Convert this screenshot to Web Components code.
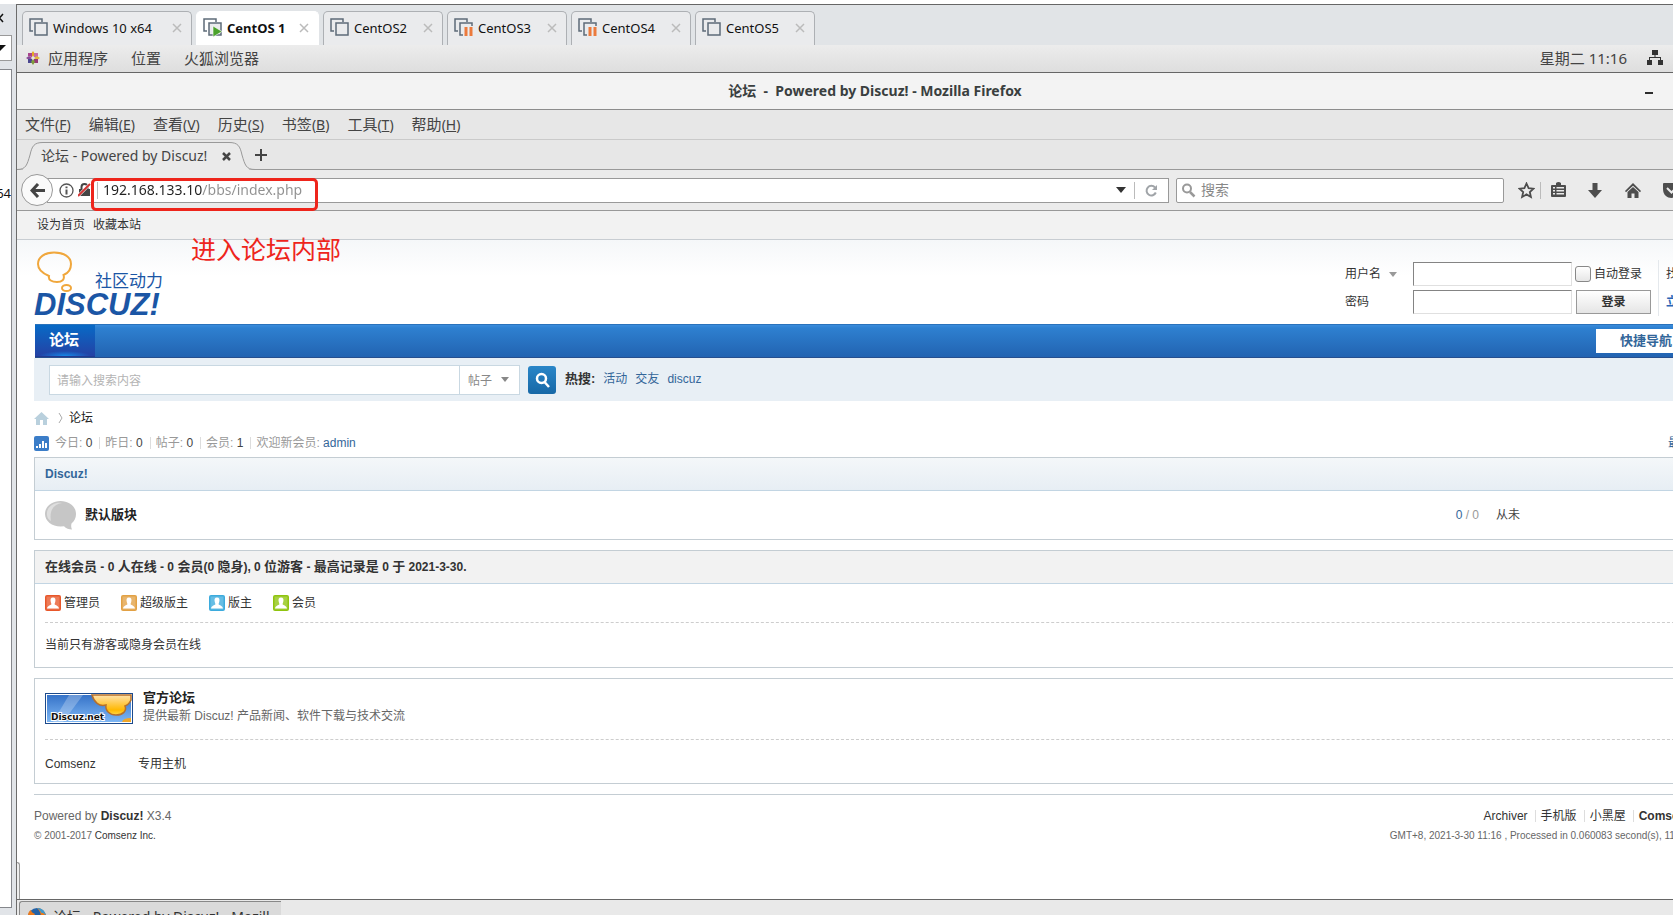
<!DOCTYPE html>
<html lang="zh-CN">
<head>
<meta charset="utf-8">
<title>论坛 - Powered by Discuz!</title>
<style>
html,body{margin:0;height:100%;overflow:hidden;background:#fff}
body{font:12px/18px "Liberation Sans","Noto Sans CJK SC",sans-serif;color:#444}
</style>
</head>
<body>
<vm-workspace></vm-workspace>
<script>
const define = (name, css, html) => {
  const t = document.createElement('template');
  t.innerHTML = `<style>*{box-sizing:border-box}:host{display:block;box-sizing:border-box}a{color:inherit;text-decoration:none}button,input,select{font:inherit;color:inherit;margin:0}button{padding:0;border:0;background:none}svg{display:block;flex:none}${css}</style>${html}`;
  customElements.define(name, class extends HTMLElement {
    constructor() {
      super();
      this.attachShadow({mode: 'open'}).append(t.content.cloneNode(true));
    }
  });
};
const UI = '"Noto Sans","Noto Sans CJK SC",sans-serif';

/* ---------- host application: library strip and machine tabs ---------- */
define('vm-library', `
:host{width:17px;display:flex;flex-direction:column;background:#e1e4e8;border-right:1px solid #6c6c6c;font:13px/18px ${UI};color:#111;overflow:hidden}
.head{height:31px;padding-top:5px;display:flex}
.combo{width:12px;height:26px;border:1px solid #9a9a9a;border-left:0;background:#fff;display:flex;align-items:center}
.list{flex:1;margin-top:8px;margin-bottom:7px;width:12px;border:1px solid #85878c;border-left:0;background:#fff;overflow:hidden;padding-top:114px;display:flex;justify-content:flex-end;align-items:flex-start}
`, `
<div class="head"><svg width="5" height="18" stroke="#111" stroke-width="1.5" fill="none"><path d="M-4 5L3 13M3 5L-4 13"/></svg></div>
<div class="combo"><svg width="7" height="6"><path d="M-6 0H6L0 6Z" fill="#111"/></svg></div>
<div class="list">64</div>`);

define('vm-tab', `
:host{width:120px;height:34px;display:flex;align-items:center;gap:5px;padding:0 9px 2px 6px;background:#eaebed;border:1px solid #adb0b4;border-bottom:0;border-radius:5px 5px 0 0;font:13px/18px ${UI};color:#111;white-space:nowrap}
:host([wide]){width:170px}
:host([active]){width:123px;background:#fff;border-color:#fff;font-weight:700}
.play,.pause{display:none}
:host([state=play]) .play,:host([state=pause]) .pause{display:block}
button{margin-left:auto}
`, `
<svg width="19" height="19" viewBox="0 0 19 19" fill="none" stroke="#5d6b78" stroke-width="1.5"><path d="M4 13H1V1H13V4"/><rect x="6" y="5" width="12" height="12" fill="#eaebed"/>
<path class="play" d="M10 8L19 13.500L10 19Z" fill="#4ba22b" stroke="#fff" stroke-width=".6"/>
<g class="pause" stroke="none"><path d="M9 8H19V19H9Z" fill="#eaebed"/><path d="M10.500 9H13.500V18H10.500ZM15.500 9H18.500V18H15.500Z" fill="#ec7a3c"/></g></svg>
<slot></slot>
<button aria-label="关闭"><svg width="10" height="10" stroke="#bbb" stroke-width="1.5"><path d="M1 1L9 9M9 1L1 9"/></svg></button>`);

define('vm-tabstrip', `
:host{display:flex;gap:4px;height:41px;padding:6px 4px 0 5px;background:#e1e4e7;border-top:1px solid #666}
`, `<vm-tab wide>Windows 10 x64</vm-tab><vm-tab active state="play">CentOS 1</vm-tab><vm-tab>CentOS2</vm-tab><vm-tab state="pause">CentOS3</vm-tab><vm-tab state="pause">CentOS4</vm-tab><vm-tab>CentOS5</vm-tab>`);

/* ---------- guest desktop panel ---------- */
define('guest-panel', `
:host{display:flex;align-items:center;height:28px;padding:0 70px 2px 9px;background:linear-gradient(#ececec,#dedede);border-bottom:1px solid #666;font:15px/20px ${UI};color:#444;white-space:nowrap}
a{margin-right:23px}
svg{margin-right:8px}
time{margin-left:auto;margin-right:20px}
.net{margin:0}
`, `
<svg width="14" height="14" viewBox="0 0 14 14"><path d="M7 0L9 3L7 6L5 3Z" fill="#e5a820"/><path d="M2 2L6 2L6 6L2 5Z" fill="#a8448c"/><path d="M12 2L8 2L8 6L12 6Z" fill="#c86fa5"/><path d="M0 7L3 5L6 7L3 9Z" fill="#8a4a98"/><path d="M14 7L11 5L8 7L11 9Z" fill="#e2b93a"/><path d="M2 12L2 8L6 8L6 12Z" fill="#4b468f"/><path d="M12 12L8 12L8 8L12 8Z" fill="#963a75"/><path d="M7 14L5 11L7 8L9 11Z" fill="#7e9c3a"/></svg>
<a href="#">应用程序</a><a href="#">位置</a><a href="#">火狐浏览器</a>
<time>星期二 11:16</time>
<svg class="net" width="16" height="16" fill="#333"><path d="M5 0H11V5H8.500V7H14V10H16V15H11V10H13V8H3V10H5V15H0V10H2V7H7.500V5H5Z"/></svg>`);

/* ---------- browser chrome ---------- */
define('ff-title', `
:host{display:grid;grid-template-columns:1fr auto 1fr;align-items:center;height:37px;padding:0 80px;background:#f3f3f3;border-bottom:1px solid #8c8c8c;font:700 14px/18px ${UI};color:#3a3f3f}
h1{grid-column:2;margin:0;font:inherit;white-space:pre}
button{justify-self:end}
`, `<h1>论坛  -  Powered by Discuz! - Mozilla Firefox</h1><button aria-label="最小化"><svg width="8" height="8"><path d="M0 5H8V7H0Z" fill="#2c2c2c"/></svg></button>`);

define('ff-menubar', `
:host{display:flex;align-items:center;gap:18px;height:30px;padding-left:8px;background:#e7e7e7;border-bottom:1px solid #cacaca;font:14px/20px ${UI};color:#444}
span{font-size:15px}
`, [['文件','F'],['编辑','E'],['查看','V'],['历史','S'],['书签','B'],['工具','T'],['帮助','H']].map(([t,k])=>`<a href="#"><span>${t}</span>(<u>${k}</u>)</a>`).join(''));

define('ff-tabs', `
:host{display:flex;height:30px;background:#e7e7e7;border-bottom:1px solid #999;font:14px/20px ${UI};color:#444}
.tab{width:238px;height:30px;display:grid}
.tab>*{grid-area:1/1}
.label{display:flex;align-items:center;justify-content:space-between;padding:2px 24px 0 24px;white-space:nowrap}
.add{display:flex;align-items:center}
`, `
<div class="tab"><svg width="238" height="30"><path d="M0 29.500C9 29.500 10 25 13 15C15 6 17 2.500 26 2.500H212C221 2.500 223 6 225 15C228 25 229 29.500 238 29.500V30H0Z" fill="#eaeaea" stroke="#999"/><path d="M6 29.500H232" stroke="#eaeaea"/></svg>
<div class="label"><span>论坛 - Powered by Discuz!</span><button aria-label="关闭标签页"><svg width="9" height="9" stroke="#444" stroke-width="2.500"><path d="M1 1L8 8M8 1L1 8"/></svg></button></div></div>
<button class="add" aria-label="新建标签页"><svg width="12" height="12"><path d="M5 0H7V5H12V7H7V12H5V7H0V5H5Z" fill="#444"/></svg></button>`);

define('ff-navbar', `
:host{display:flex;align-items:center;height:41px;padding:0 5px 0 4px;background:#ebebeb;border-bottom:1px solid #999;font:14px/20px ${UI};color:#444}
.back{z-index:1;width:32px;height:32px;border:1px solid #999;border-radius:50%;background:#fafafa;display:grid;place-items:center;flex:none}
.url,.find{height:25px;background:#fff;border:1px solid #999;display:flex;align-items:center}
.url{flex:1;margin-left:-6px;padding-left:11px}
.find{width:328px;margin:0 8px 0 7px;border-radius:2px;padding-left:4px;gap:5px}
input{border:0;outline:0;padding:0;min-width:0;flex:1;background:none}
.address{margin-left:5px;padding:0;background:linear-gradient(90deg,#222 99px,#909090 99px);-webkit-background-clip:text;background-clip:text;color:transparent}
.sep{border-left:1px solid #bbb;height:17px}
.lock{margin-left:4px;margin-right:6px}
.tool{width:38px;display:grid;place-items:center;flex:none}
.star{width:28px}
.list{width:34px;margin-right:1px}
.reload{width:33px;display:grid;place-items:center}
.drop{margin-right:8px}
input::placeholder{color:#888;opacity:1}
`, `
<button class="back" aria-label="后退"><svg width="15" height="15" fill="none" stroke="#444" stroke-width="3"><path d="M8 1L2 7.500L8 14M2 7.500H15"/></svg></button>
<div class="url">
<svg width="15" height="15" fill="none" stroke="#555" stroke-width="1.300"><circle cx="7.500" cy="7.500" r="6.500"/><path d="M7.500 6.500V11.500M7.500 3.500V5.200" stroke-width="2"/></svg>
<svg class="lock" width="13" height="14"><path d="M1 6H12V13H1Z" fill="#444"/><path d="M3.500 6V4A3 3 0 0 1 9.500 4V6" fill="none" stroke="#444" stroke-width="2"/><path d="M0 13L12 1" stroke="#fff" stroke-width="3"/><path d="M0 13L12 1" stroke="#d23434" stroke-width="2"/></svg>
<i class="sep"></i>
<input class="address" aria-label="地址" value="192.168.133.10/bbs/index.php">
<button class="drop" aria-label="历史地址"><svg width="10" height="6"><path d="M0 0H10L5 6Z" fill="#333"/></svg></button><i class="sep"></i>
<button class="reload" aria-label="刷新"><svg width="13" height="13" fill="none" stroke="#a0a4a8" stroke-width="2"><path d="M10 3.500A4.800 4.800 0 1 0 10.800 8.500"/><path d="M12 1V6H7Z" fill="#a0a4a8" stroke="none"/></svg></button>
</div>
<label class="find"><svg width="15" height="15" fill="none" stroke="#999" stroke-width="2"><circle cx="6" cy="5.500" r="4"/><path d="M9 9L13.500 13.500" stroke-width="2.500"/></svg><input aria-label="搜索" placeholder="搜索"></label>
<button class="tool star" aria-label="收藏"><svg width="17" height="17" fill="none" stroke="#4d4d4d" stroke-width="1.800"><path d="M8.500 1.500L10.600 6.200L15.500 6.700L11.800 10L12.900 15L8.500 12.400L4.100 15L5.200 10L1.500 6.700L6.400 6.200Z"/></svg></button><i class="sep"></i>
<button class="tool list" aria-label="书签列表"><svg width="15" height="16" fill="#4d4d4d"><path fill-rule="evenodd" d="M1 3H5V1Q7.500 -1 10 1V3H14Q15 3 15 4V14Q15 15 14 15H1Q0 15 0 14V4Q0 3 1 3ZM2 5V6.500H4V5ZM5.500 5V6.500H13V5ZM2 8V9.500H4V8ZM5.500 8V9.500H13V8ZM2 11V12.500H4V11ZM5.500 11V12.500H13V11Z"/></svg></button>
<button class="tool" aria-label="下载"><svg width="14" height="15"><path d="M4.500 0H9.500V7H14L7 15L0 7H4.500Z" fill="#4d4d4d"/></svg></button>
<button class="tool" aria-label="主页"><svg width="16" height="15"><path d="M8 0L16 8L15 9.200L8 2.800L1 9.200L0 8Z" fill="#4d4d4d"/><path d="M8 4L13.500 9V15H9.500V10.500H6.500V15H2.500V9Z" fill="#4d4d4d"/></svg></button>
<button class="tool" aria-label="Pocket"><svg width="17" height="15"><path d="M1 0H16Q17 0 17 1V6C17 18 0 18 0 6V1Q0 0 1 0Z" fill="#4d4d4d"/><path d="M4 5L8.500 9.500L13 5" fill="none" stroke="#ebebeb" stroke-width="2"/></svg></button>
<button class="tool" aria-label="菜单"><svg width="16" height="14" stroke="#4d4d4d" stroke-width="2"><path d="M0 2H16M0 7H16M0 12H16"/></svg></button>`);

/* ---------- forum page ---------- */
define('dz-topbar', `:host{display:flex;align-items:center;gap:8px;height:29px;padding:0 17px 0 20px;background:#f2f2f2;border-bottom:1px solid #c8cdd2;color:#333}`,
`<a href="#">设为首页</a><a href="#">收藏本站</a>`);

define('dz-logo', `
a{display:grid;grid-template-columns:auto auto;width:130px;color:#1b56a5;justify-content:start}
svg{margin-left:3px;grid-row:1}
.sub{font:17px/18px "Noto Sans CJK SC",sans-serif;align-self:end;padding-bottom:4px;margin-left:23px}
.name{grid-column:1/3;font:italic 700 31px/24px "Liberation Sans",sans-serif}
`, `<a href="#"><svg width="35" height="42" viewBox="0 0 35 42" fill="none" stroke="#f0a73c" stroke-width="2"><path d="M17 1.500C8 1.500 1 6 1 13C1 19 6 22.500 12 25C11 29 15 31 20 31C25 31 28 28.500 26.500 24C32 22 34 18 34 13C34 6 27 1.500 17 1.500Z"/><ellipse cx="29.500" cy="37" rx="4.500" ry="3"/></svg><span class="sub">社区动力</span><span class="name">DISCUZ!</span></a>`);

define('dz-login', `
form{display:grid;grid-template-columns:68px 159px 76px auto;column-gap:0;row-gap:4px;align-items:center;white-space:nowrap;color:#333}
.field{width:159px;height:24px;border:1px solid;border-color:#848484 #e0e0e0 #e0e0e0 #848484;background:#fff}
label{display:flex;align-items:center}
label svg{margin-left:8px}
.auto{gap:3px;margin-left:3px}
.auto input{appearance:none;width:16px;height:16px;border:1px solid #888;border-radius:3px;background:linear-gradient(#fff,#e6e6e6)}
button{height:24px;width:75px;margin-left:4px;border:1px solid #999;background:linear-gradient(#fff,#e5e5e5);font-weight:700}
.more{margin-left:10px;border-left:1px solid #e4e8ec;padding-left:7px;padding-right:2px;line-height:28px;margin-block:-2px}
.blue{color:#2b65b7;font-weight:700}
`, `<form><label for="u">用户名<svg width="8" height="5"><path d="M0 0H8L4 5Z" fill="#999"/></svg></label><input class="field" id="u"><label class="auto"><input type="checkbox">自动登录</label><a class="more" href="#">找回密码</a>
<label for="p">密码</label><input class="field" id="p" type="password"><button type="button">登录</button><a class="more blue" href="#">立即注册</a></form>`);

define('dz-header', `
:host{display:flex;justify-content:space-between;height:84px;padding:11px 17px 0;background:linear-gradient(#f5f7f9,#fff 36px)}
dz-login{margin-top:11px}
`, `<dz-logo></dz-logo><dz-login></dz-login>`);

define('dz-nav', `
:host{display:flex;justify-content:space-between;height:34px;margin:0 17px 0 18px;background:linear-gradient(#3a8cdc,#2e80d0 3px,#2263b1);border-bottom:1px solid #264f8e;border-top:1px solid #2a72bb;font-weight:700}
.cur{display:grid;place-items:center;width:60px;padding-right:2px;padding-bottom:2px;background:radial-gradient(ellipse 26px 5px at 50% 100%,#1389e8,#1389e800),linear-gradient(#086ac6,#2442a5);color:#fff;font-size:15px;border-bottom:1px solid #233a92}
.quick{width:120px;height:24px;margin-top:4px;background:#fff;color:#336699;display:flex;align-items:center;padding-left:24px;font-size:13px}
`, `<a class="cur" href="#">论坛</a><a class="quick" href="#">快捷导航</a>`);

define('dz-search', `
:host{display:flex;align-items:center;height:43px;margin:0 17px;padding:0 15px;background:#e8eff5}
.box{display:flex;width:471px;height:30px;background:#fff;border:1px solid #c9d8e2}
input{flex:1;min-width:0;border:0;border-right:1px solid #c9d8e2;padding:2px 8px 0 7px;background:none}
input::placeholder{color:#b4b4b4;opacity:1}
.kind{display:grid;width:59px;align-items:center}
.kind>*{grid-area:1/1}
select{appearance:none;border:0;background:none;padding:2px 0 0 8px;width:100%;height:28px;color:#888}
.kind svg{justify-self:end;margin-right:10px;pointer-events:none}
.go{width:28px;height:28px;margin:0 9px 0 8px;border-radius:3px;background:linear-gradient(#2a86c8,#1768a6);display:grid;place-items:center}
.hot{display:flex;gap:8px;color:#336699;padding-bottom:2px}
b{color:#333;font-size:13px}
`, `<div class="box"><input aria-label="搜索内容" placeholder="请输入搜索内容"><div class="kind"><select aria-label="搜索范围"><option>帖子</option></select><svg width="8" height="5"><path d="M0 0H8L4 5Z" fill="#888"/></svg></div></div>
<button class="go" aria-label="搜索"><svg width="15" height="16" fill="none" stroke="#fff" stroke-width="2.500"><circle cx="6.500" cy="6.500" r="4.500"/><path d="M9.500 10L14 15"/></svg></button>
<div class="hot"><b>热搜:</b><a href="#">活动</a><a href="#">交友</a><a href="#">discuz</a></div>`);

define('dz-crumb', `:host{display:flex;align-items:center;height:32px;margin:0 17px;padding-top:2px;color:#222}.gt{margin:0 6px 0 9px}`,
`<a href="#" aria-label="首页"><svg width="15" height="13" fill="#b9d0dd"><path d="M7.500 0L15 7H13V13H9V8H6V13H2V7H0Z"/></svg></a><svg class="gt" width="5" height="10" fill="none" stroke="#aaa"><path d="M1 0L4 5L1 10"/></svg><a href="#">论坛</a>`);

define('dz-stats', `
:host{display:flex;align-items:center;height:20px;margin:0 17px 4px;color:#999;white-space:nowrap}
svg{margin-right:6px}
span+span{margin-left:7px;padding-left:6px;background:linear-gradient(#ddd,#ddd) 0 50%/1px 12px no-repeat}
em{font-style:normal;color:#444}
a{color:#336699}
.new{margin-left:auto;color:#336699}
`, `<svg width="15" height="15"><rect width="15" height="15" rx="2" fill="#3b7dc8"/><path d="M2 10H4V12H2ZM5 8H7V12H5ZM8 5H10V12H8ZM11 7H13V12H11Z" fill="#fff"/></svg>
<span>今日: <em>0</em></span><span>昨日: <em>0</em></span><span>帖子: <em>0</em></span><span>会员: <em>1</em></span><span>欢迎新会员: <a href="#">admin</a></span><a class="new" href="#">最新回复</a>`);

define('dz-box', `
:host{margin:0 17px 10px;border:1px solid #c4cdd3}
header{height:33px;padding:0 10px;display:flex;align-items:center;font-weight:700;border-bottom:1px solid #c2d5e3;background:#f2f2f2;color:#333}
:host([tone=blue]) header{background:linear-gradient(#f4f7f9,#e7eef4);color:#336699}
:host([bare]) header{display:none}
`, `<header><slot name="title"></slot></header><slot></slot>`);

define('dz-forums', `
table{width:100%;border-collapse:collapse;table-layout:fixed}
td{padding:0;height:48px;vertical-align:middle}
.ico{width:50px;padding-left:10px}
.name{font-weight:700;font-size:13px;color:#222}
.num{width:130px;text-align:right;color:#999}
.num em{font-style:normal;color:#336699}
.last{width:236px;padding-left:17px}
`, `<table><tr><td class="ico"><svg width="32" height="29"><path d="M15.500 0C7 0 0 5.500 0 13C0 20 7 25.500 15.500 25.500L19 25.300C21 27.500 24 28.500 27 28.500C26 26.500 26 24.500 26.500 22.500C29.500 20 31 17 31 13C31 5.500 24 0 15.500 0Z" fill="#c6c6c6"/><path d="M2 14C1 6 9 1 17 2C9 3 4 9 6 20C4 19 2 17 2 14Z" fill="#dedede"/></svg></td><td class="name"><a href="#">默认版块</a></td><td class="num"><em>0</em> / 0</td><td class="last">从未</td></tr></table>`);

define('dz-role', `:host{display:flex;align-items:center;gap:3px;color:#333}
.bg{fill:var(--tone)}`,
`<svg width="16" height="16"><rect class="bg" width="16" height="16" rx="2"/><rect x="1.500" y="1.500" width="13" height="13" fill="#fff" fill-opacity=".22"/><path d="M8 2.500C5.600 2.500 5.200 4.500 5.700 6.500C6 8 6.500 8.500 6.300 9.500C5.500 10.300 2.500 10.500 2 13.500H14C13.500 10.500 10.500 10.300 9.700 9.500C9.500 8.500 10 8 10.300 6.500C10.800 4.500 10.400 2.500 8 2.500Z" fill="#fff"/></svg><slot></slot>`);

define('dz-online', `
:host{padding:0 10px;color:#333}
.roles{display:flex;gap:21px;height:39px;align-items:center;border-bottom:1px dashed #cdcdcd}
p{margin:0;height:44px;line-height:44px}
`, `<div class="roles"><dz-role style="--tone:#e8572a">管理员</dz-role><dz-role style="--tone:#e2a144">超级版主</dz-role><dz-role style="--tone:#3cabdd">版主</dz-role><dz-role style="--tone:#8fc40e">会员</dz-role></div><p>当前只有游客或隐身会员在线</p>`);

define('dz-links', `
:host{padding:0 10px;color:#333}
.main{display:flex;gap:10px;height:61px;padding-top:10px;border-bottom:1px dashed #cdcdcd}
.banner{margin-top:4px}
h2{margin:0;font-size:13px;line-height:18px;color:#222}
p{margin:0;color:#666}
.more{display:flex;height:43px;padding-top:4px;align-items:center}
.more a{width:93px}
text{font:700 9px "DejaVu Sans",sans-serif}
`, `<div class="main"><a class="banner" href="#"><svg width="88" height="31"><defs><linearGradient id="b" x1="0" y1="0" x2="0" y2="1"><stop stop-color="#3673c8"/><stop offset="1" stop-color="#7db6f4"/></linearGradient><linearGradient id="o" x1="0" y1="0" x2="0" y2="1"><stop stop-color="#ffe2ad"/><stop offset=".75" stop-color="#ffb800"/><stop offset="1" stop-color="#ffd94a"/></linearGradient></defs><rect width="88" height="31" fill="#1c4a8c"/><rect x="1" y="1" width="86" height="29" fill="#fff"/><rect x="2" y="2" width="84" height="27" fill="url(#b)"/><path d="M24 2H38L18 29H8Z" fill="#fff" opacity=".25"/><path d="M47 2C49 9 54 14 61 12C60 18 65 22 71 22C78 22 82 18 80 13C83 12 85 9 86 7V2Z" fill="url(#o)" stroke="#b5702c" stroke-width="1.500"/><path d="M77 29Q78 25 86 25V29Z" fill="#f0a72a"/><text x="6" y="27" fill="#111" stroke="#fff" stroke-width="2" paint-order="stroke">Discuz.net</text></svg></a><div><h2><a href="#">官方论坛</a></h2><p>提供最新 Discuz! 产品新闻、软件下载与技术交流</p></div></div>
<div class="more"><a href="#">Comsenz</a><a href="#">专用主机</a></div>`);

define('dz-footer', `
:host{display:flex;justify-content:space-between;margin:0 17px;padding-top:11px;border-top:1px solid #c4cdd3;color:#666;white-space:nowrap}
p{margin:0;line-height:20px}
.small{font-size:10px}
.right{text-align:right}
a,b{color:#333}
.right a+a{margin-left:7px;padding-left:6px;background:linear-gradient(#ddd,#ddd) 0 50%/1px 12px no-repeat}
`, `<div><p>Powered by <b>Discuz!</b> X3.4</p><p class="small">© 2001-2017 <a href="#">Comsenz Inc.</a></p></div>
<div class="right"><p><a href="#">Archiver</a><a href="#">手机版</a><a href="#">小黑屋</a><a href="#"><b>Comsenz Inc.</b></a></p><p class="small">GMT+8, 2021-3-30 11:16 , Processed in 0.060083 second(s), 11 queries .</p></div>`);

define('dz-page', `:host{background:#fff;flex:1;min-height:0;overflow:hidden;position:relative}
.grip{position:absolute;left:0;bottom:0;width:3px;height:37px;border:1px solid #999;border-left:0;border-bottom:0;border-radius:0 3px 0 0;background:#eee}
.zh{font-size:13px}`, `
<dz-topbar></dz-topbar><dz-header></dz-header><dz-nav></dz-nav><dz-search></dz-search><dz-crumb></dz-crumb><dz-stats></dz-stats>
<dz-box tone="blue"><a slot="title" href="#">Discuz!</a><dz-forums></dz-forums></dz-box>
<dz-box><span slot="title">${'在线会员 - 0 人在线 - 0 会员(0 隐身), 0 位游客 - 最高记录是 0 于 2021-3-30.'.replace(/[\u4e00-\u9fff]+/g, '<span class="zh">$&</span>')}</span><dz-online></dz-online></dz-box>
<dz-box bare><dz-links></dz-links></dz-box>
<dz-footer></dz-footer><div class="grip"></div>`);

/* ---------- guest taskbar: continues below the visible edge ---------- */
define('guest-taskbar', `
:host{height:31px;padding:1px 2px;background:#e9e9e9;border-top:1px solid #666;flex:none}
button{display:flex;align-items:center;gap:6px;width:262px;height:29px;padding:2px 7px 0;border:1px solid #888;border-right:0;border-radius:3px 0 0 0;background:#dadada;font:14px/20px ${UI};color:#333;white-space:nowrap}
`, `<button><svg width="20" height="20"><circle cx="10" cy="10" r="9" fill="#2463a8"/><path d="M10 1C15 1 19 5 19 10C19 16 14 19 10 19C5 19 1 15 1 9C1 6 2 4 4 3C4 5 6 6 8 7C6 10 8 13 11 13C15 13 15 6 10 1Z" fill="#ec7a1b"/><path d="M10 1C15 1 18 4 19 9C17 6 15 5 14 6C14 4 12 2 10 1Z" fill="#3d9ad0"/></svg>论坛 - Powered by Discuz! - Mozill...</button>`);

/* ---------- workspace ---------- */
define('vm-workspace', `
:host{display:flex;height:100vh;overflow:hidden}
.view{flex:1;min-width:0;overflow:hidden;padding-top:4px;display:flex;flex-direction:column}
vm-library{margin-top:4px}
.guest{position:relative;width:calc(100% + 60px);flex:none;height:calc(100vh - 30px);display:flex;flex-direction:column}
.mark{position:absolute;left:74px;top:133px;width:227px;height:33px;border:3px solid #ee251c;border-radius:5px;z-index:2}
.note{position:absolute;left:174px;top:187px;font:25px/32px "Noto Sans CJK SC",sans-serif;color:#ee251c;white-space:nowrap;z-index:2}
`, `<vm-library></vm-library><div class="view"><vm-tabstrip></vm-tabstrip><div class="guest"><guest-panel></guest-panel><ff-title></ff-title><ff-menubar></ff-menubar><ff-tabs></ff-tabs><ff-navbar></ff-navbar><dz-page></dz-page><guest-taskbar></guest-taskbar><div class="mark"></div><div class="note">进入论坛内部</div></div></div>`);
</script>
</body>
</html>
